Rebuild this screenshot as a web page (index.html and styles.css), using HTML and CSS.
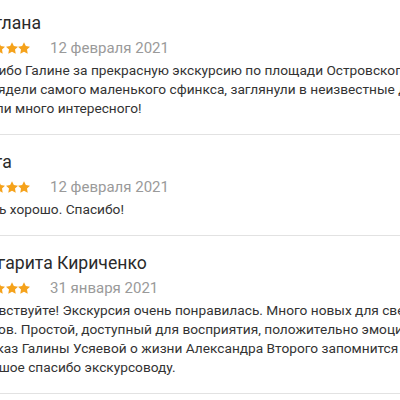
FILE: index.html
```html
<!DOCTYPE html>
<html>

<head>
  <title>Отзывы</title>
  <link rel="stylesheet" href="styles.css">
</head>

<body>
  <div class="reviews">
    <div class="review">
      <div class="review-name">Светлана</div>
      <div class="review-meta">
        <div class="stars">
          <svg viewBox="2 2 20 19.1"><path d="M12 2l3.09 6.26L22 9.27l-5 4.87 1.18 6.88L12 17.77l-6.18 3.25L7 14.14 2 9.27l6.91-1.01L12 2z" /></svg>
          <svg viewBox="2 2 20 19.1"><path d="M12 2l3.09 6.26L22 9.27l-5 4.87 1.18 6.88L12 17.77l-6.18 3.25L7 14.14 2 9.27l6.91-1.01L12 2z" /></svg>
          <svg viewBox="2 2 20 19.1"><path d="M12 2l3.09 6.26L22 9.27l-5 4.87 1.18 6.88L12 17.77l-6.18 3.25L7 14.14 2 9.27l6.91-1.01L12 2z" /></svg>
          <svg viewBox="2 2 20 19.1"><path d="M12 2l3.09 6.26L22 9.27l-5 4.87 1.18 6.88L12 17.77l-6.18 3.25L7 14.14 2 9.27l6.91-1.01L12 2z" /></svg>
          <svg viewBox="2 2 20 19.1"><path d="M12 2l3.09 6.26L22 9.27l-5 4.87 1.18 6.88L12 17.77l-6.18 3.25L7 14.14 2 9.27l6.91-1.01L12 2z" /></svg>
        </div>
        <span class="review-date">12 февраля 2021</span>
      </div>
      <p class="review-text">Спасибо Галине за прекрасную экскурсию по площади Островского!<br>
        Поглядели самого маленького сфинкса, заглянули в неизвестные дворики,<br>
        узнали много интересного!</p>
    </div>

    <div class="review">
      <div class="review-name">Ольга</div>
      <div class="review-meta">
        <div class="stars">
          <svg viewBox="2 2 20 19.1"><path d="M12 2l3.09 6.26L22 9.27l-5 4.87 1.18 6.88L12 17.77l-6.18 3.25L7 14.14 2 9.27l6.91-1.01L12 2z" /></svg>
          <svg viewBox="2 2 20 19.1"><path d="M12 2l3.09 6.26L22 9.27l-5 4.87 1.18 6.88L12 17.77l-6.18 3.25L7 14.14 2 9.27l6.91-1.01L12 2z" /></svg>
          <svg viewBox="2 2 20 19.1"><path d="M12 2l3.09 6.26L22 9.27l-5 4.87 1.18 6.88L12 17.77l-6.18 3.25L7 14.14 2 9.27l6.91-1.01L12 2z" /></svg>
          <svg viewBox="2 2 20 19.1"><path d="M12 2l3.09 6.26L22 9.27l-5 4.87 1.18 6.88L12 17.77l-6.18 3.25L7 14.14 2 9.27l6.91-1.01L12 2z" /></svg>
          <svg viewBox="2 2 20 19.1"><path d="M12 2l3.09 6.26L22 9.27l-5 4.87 1.18 6.88L12 17.77l-6.18 3.25L7 14.14 2 9.27l6.91-1.01L12 2z" /></svg>
        </div>
        <span class="review-date">12 февраля 2021</span>
      </div>
      <p class="review-text">Очень хорошо. Спасибо!</p>
    </div>

    <div class="review">
      <div class="review-name">Маргарита Кириченко</div>
      <div class="review-meta">
        <div class="stars">
          <svg viewBox="2 2 20 19.1"><path d="M12 2l3.09 6.26L22 9.27l-5 4.87 1.18 6.88L12 17.77l-6.18 3.25L7 14.14 2 9.27l6.91-1.01L12 2z" /></svg>
          <svg viewBox="2 2 20 19.1"><path d="M12 2l3.09 6.26L22 9.27l-5 4.87 1.18 6.88L12 17.77l-6.18 3.25L7 14.14 2 9.27l6.91-1.01L12 2z" /></svg>
          <svg viewBox="2 2 20 19.1"><path d="M12 2l3.09 6.26L22 9.27l-5 4.87 1.18 6.88L12 17.77l-6.18 3.25L7 14.14 2 9.27l6.91-1.01L12 2z" /></svg>
          <svg viewBox="2 2 20 19.1"><path d="M12 2l3.09 6.26L22 9.27l-5 4.87 1.18 6.88L12 17.77l-6.18 3.25L7 14.14 2 9.27l6.91-1.01L12 2z" /></svg>
          <svg viewBox="2 2 20 19.1"><path d="M12 2l3.09 6.26L22 9.27l-5 4.87 1.18 6.88L12 17.77l-6.18 3.25L7 14.14 2 9.27l6.91-1.01L12 2z" /></svg>
        </div>
        <span class="review-date">31 января 2021</span>
      </div>
      <p class="review-text">Здравствуйте! Экскурсия очень понравилась. Много новых для свежих<br>
        фактов. Простой, доступный для восприятия, положительно эмоциональный<br>
        рассказ Галины Усяевой о жизни Александра Второго запомнится надолго.<br>
        Большое спасибо экскурсоводу.</p>
    </div>
  </div>
</body>

</html>
```

FILE: styles.css
```css
body {
  margin: 0;
  overflow: hidden;
  background: #fff;
  font-family: Roboto, "Noto Sans", Arial, sans-serif;
  color: #333;
}

.reviews {
  margin-top: -4px;
  margin-left: -35px;
  width: 560px;
}

.review {
  padding: 17px 0 16px 2px;
  border-bottom: 1px solid #e2e2e2;
}

.review-name {
  margin-left: -4px;
  font-size: 17.6px;
  line-height: 20px;
  color: #2a2a2a;
}

.review-meta {
  display: flex;
  align-items: center;
  margin-top: 5px;
  height: 20px;
}

.stars {
  display: flex;
  gap: 0.5px;
  margin-left: 1px;
}

.stars svg {
  flex: none;
  width: 12px;
  height: 12px;
  fill: #f5a21b;
}

.review-date {
  margin-left: 20px;
  font-size: 15px;
  line-height: 20px;
  color: #9a9a9a;
}

.review-text {
  margin: 3px 0 0 0;
  font-size: 13.7px;
  line-height: 19px;
  white-space: nowrap;
}
```
